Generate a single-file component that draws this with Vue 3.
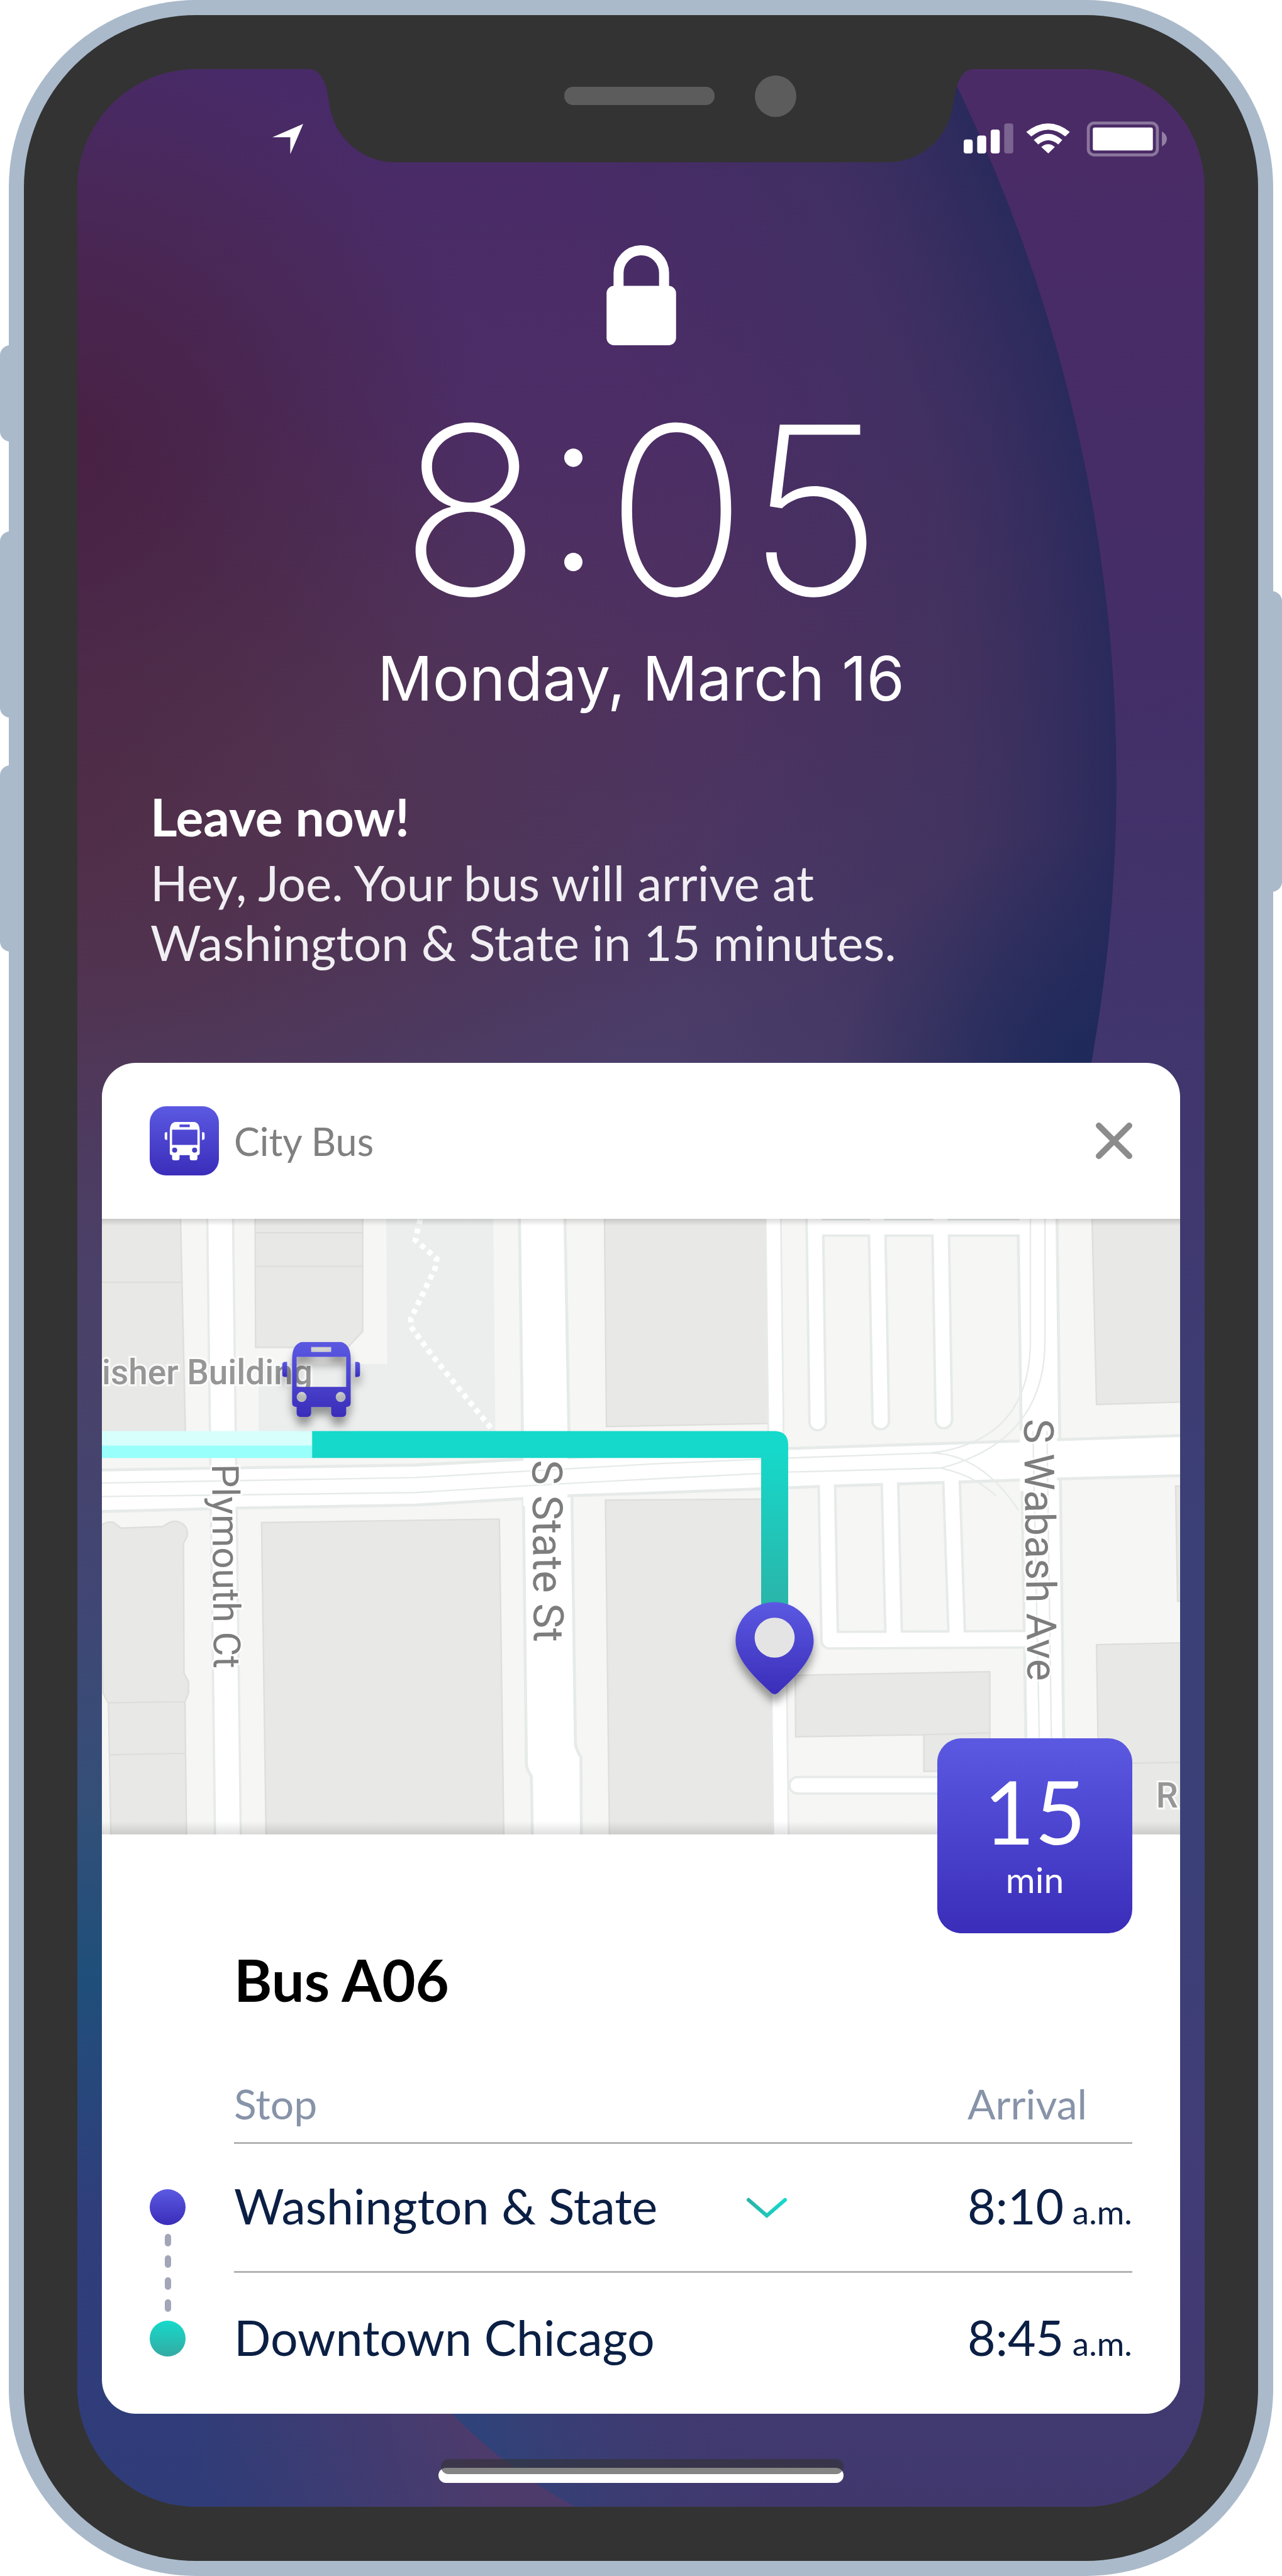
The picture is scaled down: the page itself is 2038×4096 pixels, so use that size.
<script setup>
const stops = [
  { name: 'Washington & State', time: '8:10', expandable: true },
  { name: 'Downtown Chicago', time: '8:45', expandable: false },
]
</script>

<template>
  <div class="page">
    <svg class="defs" aria-hidden="true">
      <symbol id="bus" viewBox="0 0 156 150">
        <path fill-rule="evenodd" d="M40 0H117Q137 4 137 34V122Q137 130 128 130V142Q128 150 119 150H107Q98 150 98 142V130H58V142Q58 150 49 150H38Q29 150 29 142V130Q20 130 20 122V34Q20 4 40 0ZM58 10V20H98V10ZM29 30V90H128V30ZM39 100A10 10 0 1 0 39 120A10 10 0 1 0 39 100ZM117 100A10 10 0 1 0 117 120A10 10 0 1 0 117 100Z" />
        <path d="M10 40V70H6Q0 70 0 64V46Q0 40 6 40ZM146 40V70H150Q156 70 156 64V46Q156 40 150 40Z" />
      </symbol>
    </svg>

    <main class="phone">
      <i class="key mute"></i>
      <i class="key up"></i>
      <i class="key down"></i>
      <i class="key power"></i>

      <div class="bezel">
        <div class="screen">
          <svg class="wallpaper" viewBox="155 138 2252 4872" preserveAspectRatio="none" aria-hidden="true">
            <defs>
              <linearGradient id="wBase" gradientUnits="userSpaceOnUse" x1="0" y1="138" x2="0" y2="5010">
                <stop offset="0" stop-color="#4b2b66" />
                <stop offset=".08" stop-color="#482b67" />
                <stop offset=".24" stop-color="#442e68" />
                <stop offset=".32" stop-color="#42326a" />
                <stop offset=".46" stop-color="#40386f" />
                <stop offset=".6" stop-color="#3b4076" />
                <stop offset=".73" stop-color="#3b4078" />
                <stop offset=".87" stop-color="#423c76" />
                <stop offset="1" stop-color="#40386d" />
              </linearGradient>
              <linearGradient id="wDisc" gradientUnits="userSpaceOnUse" x1="0" y1="138" x2="0" y2="5010">
                <stop offset="0" stop-color="#482a68" />
                <stop offset=".14" stop-color="#4c2d66" />
                <stop offset=".24" stop-color="#4e315f" />
                <stop offset=".34" stop-color="#4b3763" />
                <stop offset=".41" stop-color="#4b3e6a" />
                <stop offset=".52" stop-color="#4a4168" />
                <stop offset=".63" stop-color="#404674" />
                <stop offset=".71" stop-color="#344f78" />
                <stop offset=".78" stop-color="#1f4f7a" />
                <stop offset=".88" stop-color="#303e7c" />
                <stop offset="1" stop-color="#2f3c78" />
              </linearGradient>
              <radialGradient id="wRed" gradientUnits="userSpaceOnUse" cx="0" cy="0" r="1" gradientTransform="translate(80 900) scale(900 820)">
                <stop offset="0" stop-color="#482042" />
                <stop offset=".35" stop-color="#482142" stop-opacity=".7" />
                <stop offset="1" stop-color="#482440" stop-opacity="0" />
              </radialGradient>
              <radialGradient id="wBrown" gradientUnits="userSpaceOnUse" cx="0" cy="0" r="1" gradientTransform="translate(100 1650) scale(1350 900)">
                <stop offset="0" stop-color="#502d47" />
                <stop offset=".4" stop-color="#52324b" stop-opacity=".75" />
                <stop offset="1" stop-color="#523550" stop-opacity="0" />
              </radialGradient>
              <radialGradient id="wEdge" gradientUnits="userSpaceOnUse" cx="-949" cy="1560" r="3180">
                <stop offset=".74" stop-color="#3c3160" stop-opacity="0" />
                <stop offset=".9" stop-color="#3a325f" stop-opacity=".55" />
                <stop offset="1" stop-color="#2a2a5c" />
              </radialGradient>
              <radialGradient id="wNavy" gradientUnits="userSpaceOnUse" cx="2180" cy="2150" r="500">
                <stop offset="0" stop-color="#1d2a5b" />
                <stop offset="1" stop-color="#1f2a5b" stop-opacity="0" />
              </radialGradient>
              <linearGradient id="wFootL" gradientUnits="userSpaceOnUse" x1="400" y1="5000" x2="950" y2="4850">
                <stop offset="0" stop-color="#4a3b6c" stop-opacity="0" />
                <stop offset="1" stop-color="#4d3b6c" />
              </linearGradient>
              <linearGradient id="wFootR" gradientUnits="userSpaceOnUse" x1="980" y1="4950" x2="1500" y2="4800">
                <stop offset="0" stop-color="#2f437a" />
                <stop offset="1" stop-color="#403a70" stop-opacity="0" />
              </linearGradient>
            </defs>
            <rect x="155" y="138" width="2252" height="4872" fill="url(#wBase)" />
            <g>
              <circle cx="-949" cy="1560" r="3180" fill="url(#wDisc)" />
              <circle cx="-949" cy="1560" r="3180" fill="url(#wBrown)" />
              <circle cx="-949" cy="1560" r="3180" fill="url(#wRed)" />
              <circle cx="-949" cy="1560" r="3180" fill="url(#wEdge)" />
              <circle cx="-949" cy="1560" r="3180" fill="url(#wNavy)" />
            </g>
            <path d="M155 2700H780L835 4750Q980 4920 1150 5010H155Z" fill="url(#wDisc)" />
            <path d="M380 4700H780L835 4750Q980 4920 1150 5010H300Z" fill="url(#wFootL)" />
            <path d="M835 4750Q980 4920 1150 5010H2407V4700H780Z" fill="url(#wBase)" />
            <path d="M835 4750Q980 4920 1150 5010H2407V4700H780Z" fill="url(#wFootR)" />
          </svg>

          <header class="status">
            <div class="status-left">
              <svg width="49" height="49" viewBox="0 0 62 62" aria-label="Location in use"><path d="M62 0L36 61V27H0Z" fill="#fff" /></svg>
            </div>
            <div class="notch">
              <i class="speaker"></i>
              <i class="camera"></i>
            </div>
            <div class="status-right">
              <svg width="323" height="56" viewBox="0 0 406 70" fill="#fff" aria-label="Signal, Wi-Fi and battery">
                <rect x="0" y="36" width="18" height="28" rx="5" />
                <rect x="27" y="28" width="18" height="36" rx="5" />
                <rect x="54" y="16" width="18" height="48" rx="5" />
                <rect x="81" y="4" width="18" height="60" rx="5" opacity=".27" />
                <path d="M125 21Q169 -13 212 21L203 30Q169 3 135 30Z" />
                <path d="M140 37Q169 12 197 37L189 46Q169 29 149 46Z" />
                <path d="M155 51Q169 40 182 51L169 64Z" />
                <rect x="249" y="3" width="138" height="64" rx="12" fill="none" stroke="#fff" stroke-width="6" opacity=".36" />
                <rect x="258" y="12" width="120" height="46" rx="4" />
                <path d="M396 20Q406 26 406 35Q406 44 396 50Z" opacity=".4" />
              </svg>
            </div>
          </header>

          <svg class="lock" width="111" height="159" viewBox="0 0 139 200" aria-label="Locked">
            <rect x="0" y="81" width="139" height="119" rx="15" fill="#fff" />
            <path d="M24 90V56A45.500 46 0 0 1 115 56V90" fill="none" stroke="#fff" stroke-width="20" />
          </svg>
          <time class="clock">8:05</time>
          <p class="date">Monday, March 16</p>

          <section class="notice">
            <h1>Leave now!</h1>
            <p>Hey, Joe. Your bus will arrive at<br />Washington &amp; State in 15 minutes.</p>
          </section>

          <article class="card">
            <header class="card-head">
              <span class="logo"><svg width="65" height="61"><use href="#bus" /></svg></span>
              <span class="app">City Bus</span>
              <button class="close" type="button" aria-label="Close">
                <svg width="58" height="58" viewBox="0 0 72 72"><path d="M6 6L66 66M66 6L6 66" stroke="#8c8c8c" stroke-width="12" stroke-linecap="round" /></svg>
              </button>
            </header>

            <svg class="map" viewBox="204 2436 2154 1230" aria-label="Route map">
              <defs>
                <linearGradient id="violet" x1="0" y1="0" x2="0" y2="1">
                  <stop offset="0" stop-color="#5b59e2" />
                  <stop offset="1" stop-color="#3a2db9" />
                </linearGradient>
                <linearGradient id="teal" gradientUnits="userSpaceOnUse" x1="0" y1="2890" x2="0" y2="3220">
                  <stop offset="0" stop-color="#15dacb" />
                  <stop offset="1" stop-color="#2bb3a8" />
                </linearGradient>
                <linearGradient id="shadeTop" x1="0" y1="0" x2="0" y2="1">
                  <stop offset="0" stop-color="#000" stop-opacity=".14" />
                  <stop offset="1" stop-color="#000" stop-opacity="0" />
                </linearGradient>
                <linearGradient id="shadeBottom" x1="0" y1="1" x2="0" y2="0">
                  <stop offset="0" stop-color="#000" stop-opacity=".12" />
                  <stop offset="1" stop-color="#000" stop-opacity="0" />
                </linearGradient>
                <filter id="drop" x="-30%" y="-30%" width="160%" height="180%">
                  <feDropShadow dx="0" dy="16" stdDeviation="9" flood-color="#000" flood-opacity=".38" />
                </filter>
              </defs>
              <rect x="204" y="2436" width="2154" height="1230" fill="#f6f6f4" />

              <path d="M772 2430H986L990 2861H517V2726H774Z" fill="#ebeeed" />
              <g fill="#e8e8e6" stroke="#dededc" stroke-width="3">
                <path d="M200 2430H361L371 2870H200ZM200 2563H364" />
                <path d="M510 2430H725V2661L695 2693H511ZM510 2464H725M510 2531H725" />
                <path d="M1208 2430H1540V2845L1212 2851Z" />
                <path d="M2182 2430H2364V2802L2191 2807Z" />
                <path d="M200 3050Q214 3039 228 3043L242 3054L326 3051Q344 3036 358 3042Q378 3050 374 3071L367 3085L368 3344L377 3361V3384L370 3401L373 3672H222L217 3404L206 3384ZM217 3403L370 3401M220 3507L370 3504" />
                <path d="M523 3043L998 3036L1007 3672H532Z" />
                <path d="M1210 2998L1540 2996L1548 3672H1218Z" />
                <path d="M1589 3348L1978 3341V3540H1846V3467L1590 3471ZM1846 3467L1978 3463" />
                <path d="M2191 3287L2364 3283V3672H2197ZM2191 3525L2364 3522" />
                <path d="M2349 2970H2364V3200H2353Z" />
              </g>

              <g fill="none" stroke="#e6ebe9" stroke-width="38" stroke-linecap="round">
                <path d="M1628 2420L1634 2842M1752 2420L1760 2840M1879 2420L1886 2838M1628 2453H2060" />
                <path d="M1652 2950L1658 3278L2070 3276M1778 2950L1786 3276M1901 2950L1912 3274" stroke-linejoin="round" />
                <path d="M1594 3568H2070" />
                <path d="M440 2420L456 3690" stroke-width="56" />
                <path d="M1545 2420L1561 3690" stroke-width="34" />
              </g>
              <g fill="#fff" stroke="#e6ebe9" stroke-width="6">
                <path d="M1038 2430H1129L1137 2859L1143 2990L1150 3485Q1151 3495 1161 3512L1162 3672H1064L1062 3550Q1052 3535 1052 3525L1046 2993Z" />
                <path d="M2034 2430H2112L2128 3672H2053Z" />
                <path d="M198 2938L831 2928L1042 2917L1577 2895L2033 2880L2364 2869V2949L2037 2958L1637 2971L1300 2984L1143 2989L831 3008L477 3014L198 3021Z" />
              </g>
              <g fill="none" stroke="#fff" stroke-width="28" stroke-linecap="round">
                <path d="M1628 2420L1634 2842M1752 2420L1760 2840M1879 2420L1886 2838M1628 2453H2060" />
                <path d="M1652 2950L1658 3278L2070 3276M1778 2950L1786 3276M1901 2950L1912 3274" stroke-linejoin="round" />
                <path d="M1594 3568H2070" />
                <path d="M440 2420L456 3690" stroke-width="47" />
                <path d="M1545 2420L1561 3690" stroke-width="27" />
                <path d="M1090 2900V3010" stroke-width="88" stroke-linecap="butt" />
                <path d="M2075 2860V2980" stroke-width="74" stroke-linecap="butt" />
              </g>
              <g fill="none" stroke="#e6ebe9" stroke-width="3">
                <path d="M204 2964L831 2953Q1100 2938 1300 2926L1577 2914L1860 2904Q2058 2880 2059 2680V2436" />
                <path d="M204 2991L831 2983Q1100 2966 1300 2956L1577 2942L1880 2934Q2088 2880 2088 2680V2436" />
                <path d="M1860 2904Q1960 2905 2035 3018M1880 2934Q1950 2950 1990 2990" />
                <path d="M2064 2860L2077 3480M2092 2860L2101 3480" />
              </g>
              <path d="M840 2437L830 2478L873 2516L870 2534L821 2636V2651L866 2712L986 2860" fill="none" stroke="#fff" stroke-width="11" stroke-dasharray="10 9" />

              <rect x="204" y="2860" width="420" height="29" fill="#d7fffc" />
              <rect x="204" y="2889" width="420" height="25" fill="#99fffa" />
              <path d="M624 2860H1550Q1575 2862 1575 2887V3240H1521V2914H624Z" fill="url(#teal)" />

              <g class="labels">
                <text x="204" y="2766" font-size="69" font-weight="500" fill="#969696">isher Building</text>
                <text x="2310" y="3612" font-size="70" font-weight="500" fill="#969696">R</text>
                <text transform="translate(424 2926) rotate(89.500)" font-size="75">Plymouth Ct</text>
                <text transform="translate(1064 2918) rotate(89.500)" font-size="84">S State St</text>
                <text transform="translate(2046 2836) rotate(89.200)" font-size="83">S Wabash Ave</text>
              </g>

              <use href="#bus" x="564" y="2682" width="156" height="150" fill="url(#violet)" filter="url(#drop)" />
              <g filter="url(#drop)">
                <path d="M1548 3202C1592 3202 1626 3236 1626 3280C1626 3318 1582 3358 1555 3383Q1548 3389 1541 3383C1514 3358 1470 3318 1470 3280C1470 3236 1504 3202 1548 3202Z" fill="url(#violet)" />
                <circle cx="1548" cy="3273" r="40" fill="#e4e4e4" />
              </g>
              <rect x="204" y="2436" width="2154" height="14" fill="url(#shadeTop)" />
              <rect x="204" y="3640" width="2154" height="26" fill="url(#shadeBottom)" />
            </svg>

            <section class="details">
              <div class="badge"><strong>15</strong><span>min</span></div>
              <h2>Bus A06</h2>
              <div class="schedule">
                <div class="timeline" aria-hidden="true">
                  <i class="dot from"></i>
                  <div class="dashes"><i v-for="n in 4" :key="n"></i></div>
                  <i class="dot to"></i>
                </div>
                <table>
                  <colgroup><col class="c-stop" /><col /><col class="c-arrival" /></colgroup>
                  <thead>
                    <tr><th colspan="2">Stop</th><th>Arrival</th></tr>
                  </thead>
                  <tbody>
                    <tr v-for="stop in stops" :key="stop.name">
                      <td>{{ stop.name }}</td>
                      <td>
                        <button v-if="stop.expandable" class="more" type="button" aria-label="Show stops">
                          <svg width="64" height="34" viewBox="0 0 64 34" fill="none">
                            <defs><linearGradient id="chev"><stop stop-color="#2bb3a8" /><stop offset="1" stop-color="#15dacb" /></linearGradient></defs>
                            <path d="M3 4L32 29L61 4" stroke="url(#chev)" stroke-width="6" stroke-linecap="round" />
                          </svg>
                        </button>
                      </td>
                      <td>{{ stop.time }}<small> a.m.</small></td>
                    </tr>
                  </tbody>
                </table>
              </div>
            </section>
          </article>

          <div class="home-bar"></div>
        </div>
      </div>
    </main>
  </div>
</template>

<style>
body {
  margin: 0;
  background: #fff;
}
</style>

<style scoped>
.page {
  padding: 0 14px;
  font-family: Lato, "Liberation Sans", sans-serif;
}
.defs {
  position: absolute;
  width: 0;
  height: 0;
}
h1, h2, p {
  margin: 0;
}
button {
  padding: 0;
  border: 0;
  background: none;
  line-height: 0;
}
.phone {
  position: relative;
  padding: 24px;
  border-radius: 298px;
  background: #aabacb;
}
.key {
  position: absolute;
  left: -14px;
  width: 60px;
  border-radius: 16px;
  background: #aabacb;
}
.mute { top: 549px; height: 153px; }
.up { top: 845px; height: 296px; }
.down { top: 1217px; height: 296px; }
.power { top: 940px; right: -14px; left: auto; height: 478px; }
.bezel {
  position: relative;
  padding: 86px 85px;
  border-radius: 274px;
  background: #333;
}
.screen {
  position: relative;
  display: flex;
  flex-direction: column;
  overflow: hidden;
  padding-bottom: 38px;
  border-radius: 189px;
  color: #fff;
}
.wallpaper {
  position: absolute;
  inset: 0;
  width: 100%;
  height: 100%;
}
.status,
.lock,
.clock,
.date,
.notice,
.card,
.home-bar {
  position: relative;
}
.status {
  display: flex;
  height: 148px;
}
.status-left,
.status-right {
  display: flex;
  flex: 1;
  box-sizing: border-box;
  width: 0;
}
.status-left {
  justify-content: flex-end;
  padding: 87px 41px 0 0;
}
.status-right {
  padding: 83px 25px 0 16px;
}
.notch {
  position: relative;
  display: flex;
  box-sizing: border-box;
  width: 993px;
  padding: 10px 250px 0 374px;
  justify-content: space-between;
  border-radius: 0 0 105px 105px;
  background: #333;
}
.notch::before,
.notch::after {
  position: absolute;
  top: 0;
  width: 29px;
  height: 60px;
  content: "";
}
.notch::before {
  right: 100%;
  background: radial-gradient(29px 60px at 0 100%, transparent 98%, #333 100%);
}
.notch::after {
  left: 100%;
  background: radial-gradient(29px 60px at 100% 100%, transparent 98%, #333 100%);
}
.speaker {
  width: 239px;
  height: 29px;
  margin-top: 18px;
  border-radius: 14px;
  background: #5c5c5c;
}
.camera {
  width: 66px;
  height: 66px;
  border-radius: 50%;
  background: #5c5c5c;
}
.lock {
  align-self: center;
  margin-top: 132px;
}
.clock {
  margin-top: 76px;
  font: 200 372px/372px Inter, sans-serif;
  text-align: center;
}
.date {
  margin-top: 20px;
  font: 400 97px/124px Inter, sans-serif;
  text-align: center;
}
.notice {
  margin: 107px 116px 0;
}
.notice h1 {
  font-size: 82px;
  font-weight: 700;
  line-height: 100px;
}
.notice p {
  margin-top: 8px;
  color: #f0eef2;
  font-size: 78px;
  line-height: 95px;
}
.card {
  margin: 144px 39px 0;
  border-radius: 54px;
  background: #fff;
  color: #0b1f44;
}
.card-head {
  display: flex;
  align-items: center;
  height: 248px;
  padding: 0 76px;
}
.logo {
  display: flex;
  align-items: center;
  justify-content: center;
  width: 110px;
  height: 110px;
  border-radius: 26px;
  background: linear-gradient(#5b59e2, #3a2db9);
  fill: #fff;
}
.app {
  margin-left: 24px;
  color: #808080;
  font-size: 61px;
}
.close {
  margin-left: auto;
}
.map {
  display: block;
  width: 100%;
}
.labels {
  fill: #7d7d7d;
  font-family: Roboto, sans-serif;
  paint-order: stroke;
  stroke: #fff;
  stroke-opacity: .7;
  stroke-width: 8px;
}
.details {
  position: relative;
  padding: 173px 76px 74px;
}
.badge {
  position: absolute;
  top: -153px;
  right: 76px;
  display: flex;
  flex-direction: column;
  align-items: center;
  box-sizing: border-box;
  width: 310px;
  height: 310px;
  padding-top: 36px;
  border-radius: 38px;
  background: linear-gradient(#5b59e2, #3a2db9);
  color: #fff;
}
.badge strong {
  font-size: 140px;
  font-weight: 400;
  line-height: 158px;
}
.badge span {
  font-size: 57px;
  line-height: 60px;
}
.details h2 {
  margin-left: 134px;
  color: #000;
  font-size: 92px;
  line-height: 116px;
}
.schedule {
  display: flex;
  align-items: flex-start;
  gap: 77px;
}
.timeline {
  display: flex;
  flex-direction: column;
  align-items: center;
  gap: 14px;
  padding-top: 275px;
}
.dot {
  width: 57px;
  height: 57px;
  border-radius: 50%;
}
.from {
  background: linear-gradient(#5b59e2, #3a2db9);
}
.to {
  background: linear-gradient(#15dacb, #34aaa2);
}
.dashes {
  display: flex;
  flex-direction: column;
  justify-content: space-between;
  height: 124px;
}
.dashes i {
  width: 10px;
  height: 20px;
  border-radius: 5px;
  background: #a3a5b8;
}
table {
  flex: 1;
  width: 100%;
  table-layout: fixed;
  border-spacing: 0;
  text-align: left;
}
.c-stop { width: 815px; }
.c-arrival { width: 262px; }
th, td {
  padding: 0;
  white-space: nowrap;
}
th {
  height: 178px;
  padding-bottom: 22px;
  border-bottom: 3px solid #b3b3b3;
  color: #8793a8;
  font-size: 66px;
  font-weight: 400;
  line-height: 78px;
  vertical-align: bottom;
}
td {
  font-size: 77px;
  line-height: 96px;
}
tr:first-child td {
  padding: 50px 0 56px;
  border-bottom: 3px solid #b3b3b3;
}
tr:last-child td {
  padding-top: 54px;
}
.more {
  display: block;
  padding-top: 8px;
}
small {
  font-size: 53px;
  line-height: 53px;
}
.home-bar {
  align-self: center;
  width: 644px;
  height: 24px;
  margin-top: 86px;
  border-radius: 12px;
  background: #fff;
}
.home-bar::before {
  position: absolute;
  top: -14px;
  left: 4px;
  width: 640px;
  height: 24px;
  border-radius: 12px;
  background: rgba(51, 51, 51, .6);
  content: "";
}
</style>
